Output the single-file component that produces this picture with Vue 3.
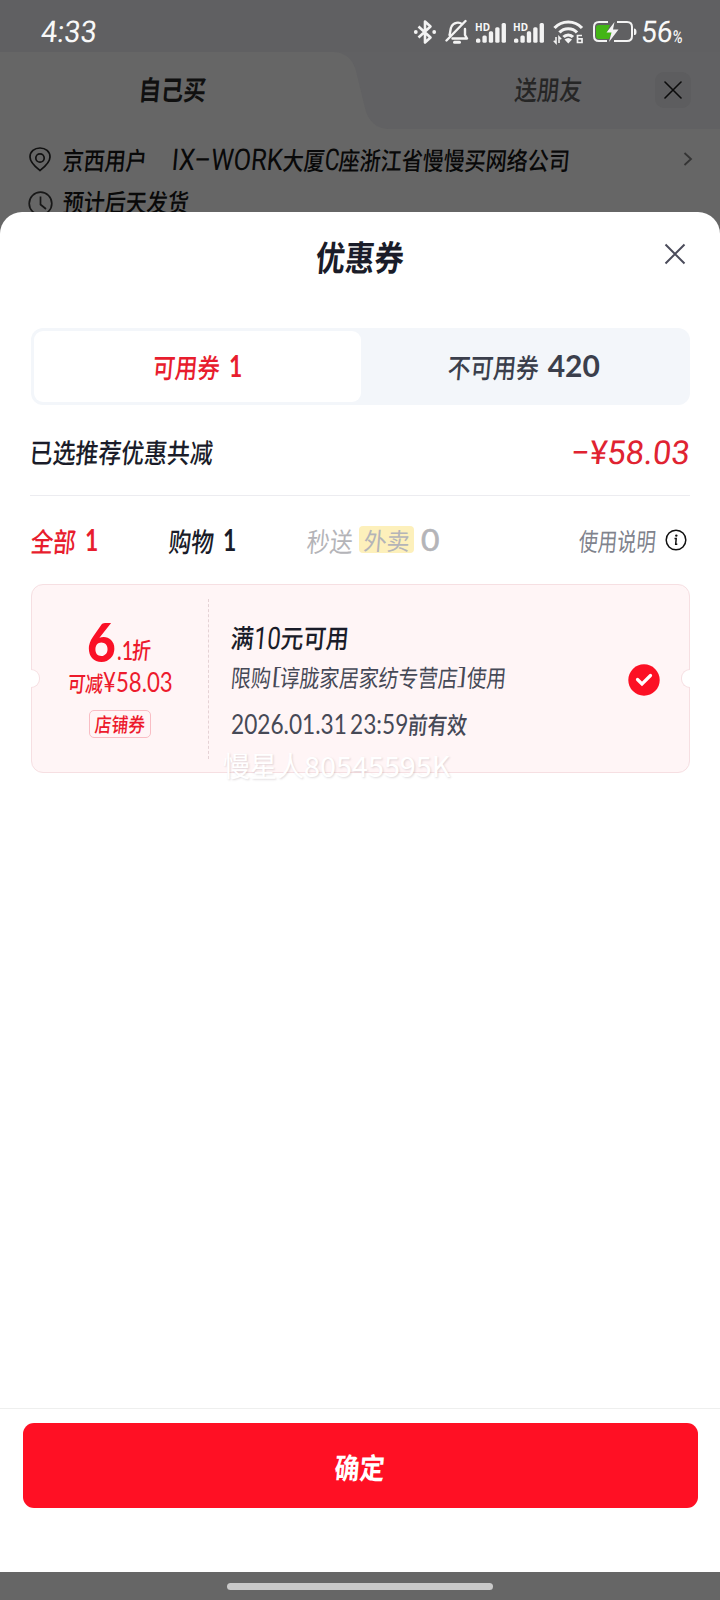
<script setup>
// Condenses a text run to the given advance width and keeps the layout in step.
const apply = (el, { value, modifiers }) => {
  const natural = el.offsetWidth
  const skew = modifiers.upright ? '' : 'skewX(-5deg) '
  el.style.transform = `${skew}scaleX(${value / natural})`
  el.style.marginRight = `${value - natural}px`
}
const vFit = { mounted: apply }
const bars = [[0, 17, 4], [6.2, 14, 7], [12.4, 10, 11], [18.6, 6, 15], [24.8, 2, 19]]
</script>

<template>
  <div class="screen">
    <header class="status">
      <span v-fit="56" class="time">4:33</span>
      <div class="indicators">
        <svg class="bt" width="24" height="26" viewBox="0 0 24 26">
          <path d="M5.500 7.500L17.500 18.500L12 23.500V2.500L17.500 7.500L5.500 18.500" fill="none" stroke="#f3f3f3" stroke-width="2.600" stroke-linejoin="round" />
          <circle cx="2.800" cy="13" r="1.900" fill="#f3f3f3" /><circle cx="21.200" cy="13" r="1.900" fill="#f3f3f3" />
        </svg>
        <svg class="bell" width="24" height="26" viewBox="0 0 24 26" fill="none" stroke="#f3f3f3" stroke-width="2.400" stroke-linecap="round" stroke-linejoin="round">
          <path d="M4.500 16C5.500 14 5 10 6.500 7.500C8.500 3.500 14 2.500 17 5.200M20 10V16L22 19.500H7.500M20.500 2L1.500 21.500" />
          <path d="M9.500 23.300H14.500" stroke-width="3" />
        </svg>
        <div v-for="n in 2" :key="n" class="signal">
          <span v-fit.upright="15" class="hd">HD</span>
          <svg width="31" height="22" viewBox="0 0 30 21.300">
            <rect v-for="b in bars" :key="b[0]" :x="b[0]" :y="b[1]" width="4.200" :height="b[2]" rx="1.500" fill="#f3f3f3" />
          </svg>
        </div>
        <svg class="wifi" width="31" height="26" viewBox="0 0 31 26" fill="none" stroke="#f3f3f3" stroke-width="3.200">
          <path d="M1.500 9C9 1 21.500 1 29 9M6.500 13.500C11 8.500 19.500 8.500 24 13.500M10.500 18C13 15.300 17.500 15.300 20 18" />
          <path d="M11.500 20.500Q15.300 17.500 19 20.500L15.300 24.500Z" fill="#f3f3f3" stroke="none" />
          <path d="M3 18V24L0.800 21.800M6 24V18L8.200 20.200" stroke-width="1.600" />
          <path d="M29 16.500H24.500V23.500H29V19.800H24.500" stroke-width="1.700" />
        </svg>
        <svg class="battery" width="46" height="24" viewBox="0 0 46 24">
          <path d="M7 5H18L15 12H20L17 19H7Q4 19 4 16V8Q4 5 7 5Z" fill="#43b516" />
          <path d="M16 2H7Q2 2 2 7V16Q2 21 7 21H15M25 2H35Q40 2 40 7V16Q40 21 35 21H22" fill="none" stroke="#f3f3f3" stroke-width="2" />
          <path d="M42 8.500Q44.500 8.500 44.500 12T42 15Z" fill="#f3f3f3" />
          <path d="M22.500 2L14.500 12.500H19.500L17 22L26.500 9.500H21Z" fill="#f3f3f3" />
        </svg>
        <span v-fit="32" class="pct">56</span>
        <span v-fit="10" class="sign">%</span>
      </div>
    </header>

    <nav class="tabs">
      <svg class="tab-shape" width="390" height="77" viewBox="0 0 390 77"><path d="M0 0H334Q351 1 356 19L365 56Q370 76 388 77H0Z" fill="#666" /></svg>
      <span v-fit="67" class="tab mine">自己买</span>
      <span v-fit="67" class="tab friend">送朋友</span>
      <div class="close-box">
        <svg width="18" height="18" viewBox="0 0 18 18"><path d="M1 1L17 17M17 1L1 17" stroke="#0b0b0b" stroke-width="1.600" stroke-linecap="round" /></svg>
      </div>
    </nav>

    <div class="address">
      <svg class="pin" width="24" height="26" viewBox="0 0 24 26" fill="none" stroke="#111" stroke-width="1.700">
        <path d="M12 24.500C9 22 2 17 2 11C2 5.500 6.500 2 12 2S22 5.500 22 11C22 17 15 22 12 24.500Z" /><circle cx="12" cy="12" r="4.200" />
      </svg>
      <span v-fit="84" class="addr">京西用户</span>
      <span v-fit="111" class="addr latin work">IX–WORK</span>
      <span v-fit="42" class="addr">大厦</span>
      <span v-fit="15" class="addr latin">C</span>
      <span v-fit="231" class="addr">座浙江省慢慢买网络公司</span>
      <svg class="chev" width="10" height="16" viewBox="0 0 10 16"><path d="M1.500 2L8 8L1.500 14" fill="none" stroke="#343434" stroke-width="1.800" /></svg>
    </div>
    <div class="delivery">
      <svg width="26" height="26" viewBox="0 0 26 26" fill="none" stroke="#181818" stroke-width="1.700"><circle cx="12.500" cy="12.500" r="11.300" /><path d="M12.500 5.500V13.500L18 18" /></svg>
      <span v-fit="126" class="addr">预计后天发货</span>
    </div>

    <section class="sheet">
      <div class="head">
        <span v-fit="88" class="title">优惠券</span>
        <svg class="x" width="22" height="22" viewBox="0 0 22 22"><path d="M1.500 1.500L20.500 20.500M20.500 1.500L1.500 20.500" stroke="#4b4c5b" stroke-width="2" /></svg>
      </div>

      <div class="segments">
        <div class="seg on"><span v-fit="67" class="cjk">可用券</span><b v-fit.upright="13" class="num">1</b></div>
        <div class="seg"><span v-fit="91" class="cjk">不可用券</span><b v-fit.upright="52" class="num">420</b></div>
      </div>

      <div class="summary">
        <span v-fit="183" class="picked">已选推荐优惠共减</span>
        <span v-fit="119" class="saved">−¥58.03</span>
      </div>

      <div class="filters">
        <div class="filter all"><span v-fit="45" class="cjk">全部</span><b v-fit.upright="13" class="num">1</b></div>
        <div class="filter shop"><span v-fit="45" class="cjk">购物</span><b v-fit.upright="13" class="num">1</b></div>
        <div class="filter fast"><span v-fit="46" class="cjk">秒送</span><i class="food"><span v-fit="46" class="cjk">外卖</span></i><b v-fit.upright="18" class="num">0</b></div>
        <div class="help">
          <span v-fit="77" class="cjk">使用说明</span>
          <svg width="22" height="22" viewBox="0 0 22 22"><circle cx="11" cy="11" r="9.800" fill="none" stroke="#111" stroke-width="1.500" /><circle cx="11.300" cy="6.600" r="1.200" fill="#111" /><path d="M9.500 9.500H11.200L10.700 15.300H12.300" fill="none" stroke="#111" stroke-width="1.500" /></svg>
        </div>
      </div>

      <article class="coupon">
        <i class="notch left"></i><i class="notch right"></i>
        <div class="value">
          <div class="rate"><b v-fit.upright="29" class="six">6</b><span v-fit.upright="16" class="tenth">.1</span><span v-fit="19" class="fold">折</span></div>
          <div class="cut"><span v-fit="35">可减</span><span v-fit.upright="70" class="money">¥58.03</span></div>
          <div class="kind"><span v-fit="50">店铺券</span></div>
        </div>
        <div class="detail">
          <div class="line cond"><span v-fit="23">满</span><span v-fit="27" class="latin">10</span><span v-fit="68">元可用</span></div>
          <div class="line limit"><span v-fit="40">限购</span><span v-fit="9" class="latin">[</span><span v-fit="178">谆胧家居家纺专营店</span><span v-fit="9" class="latin">]</span><span v-fit="39">使用</span></div>
          <div class="line expiry"><span v-fit.upright="177" class="date">2026.01.31 23:59</span><span v-fit="59">前有效</span></div>
        </div>
        <svg class="check" width="32" height="32" viewBox="0 0 32 32"><circle cx="16" cy="16" r="15.700" fill="#fc1024" /><path d="M9.500 15.500L14 20L22.500 11.500" fill="none" stroke="#fff" stroke-width="3.200" stroke-linecap="round" /></svg>
        <div class="watermark"><span v-fit.upright="81">慢星人</span><span v-fit.upright="146">80545595K</span></div>
      </article>

      <footer class="foot">
        <button class="ok"><span v-fit="50">确定</span></button>
      </footer>
    </section>
    <div class="gesture"><i></i></div>
  </div>
</template>

<style>
body { margin: 0; background: #666; }
</style>

<style scoped>
.screen { width: 720px; height: 1600px; display: flex; flex-direction: column; background: #666; overflow: hidden; font-family: "Noto Sans CJK SC", sans-serif; font-weight: 500; }
.screen span, .num, .six { display: inline-block; flex: none; white-space: nowrap; transform-origin: 0 50%; }
.status { height: 52px; flex: none; background: #606062; display: flex; align-items: center; justify-content: space-between; padding: 12px 37px 0 41px; box-sizing: border-box; color: #f8f8f8; }
.time { font: 400 30px/40px Roboto, sans-serif; }
.indicators { display: flex; align-items: center; }
.bell { margin-left: 8px; }
.signal { position: relative; width: 38px; height: 26px; display: flex; align-items: flex-start; }
.signal svg { margin: 2px 0 0 1px; }
.hd { position: absolute; left: 0; top: 2px; font: 700 10px/12px "Noto Sans", sans-serif; }
.bell + .signal { margin-left: 6px; }
.wifi { margin-left: 2px; }
.battery { margin-left: 8px; }
.pct { margin-left: 3px; font: 400 30px/40px Roboto, sans-serif; }
.sign { font: 500 18px/40px Roboto, sans-serif; padding-top: 9px; }
.tabs { position: relative; height: 77px; flex: none; background: #616163; display: flex; align-items: center; }
.tab-shape { position: absolute; left: 0; top: 0; }
.tab { position: relative; font-size: 27px; line-height: 36px; margin-bottom: 4px; }
.mine { margin-left: 139px; font-weight: 700; color: #101010; }
.friend { margin-left: 309px; color: #262626; }
.close-box { width: 36px; height: 36px; margin-left: auto; margin-right: 29px; margin-bottom: 1px; border-radius: 9px; background: #5d5d5f; display: grid; place-items: center; }
.address { height: 62px; flex: none; display: flex; align-items: center; padding: 0 27px 2px 28px; box-sizing: border-box; color: #090909; }
.addr { font-size: 25px; line-height: 36px; margin-bottom: 1px; }
.latin { font-family: Roboto, sans-serif; font-weight: 400; }
.address .latin { font-size: 30px; padding-top: 2px; }
.address .addr:nth-child(2) { margin-left: 11px; }
.work { margin-left: 25px; }
.chev { margin-left: auto; }
.delivery { height: 21px; flex: none; display: flex; align-items: flex-start; padding-left: 28px; color: #090909; }
.delivery .addr { margin: -8px 0 0 9px; }
.delivery svg { flex: none; }
.sheet { position: relative; flex: none; height: 1360px; background: #fff; border-radius: 22px 22px 0 0; display: flex; flex-direction: column; box-sizing: border-box; color: #1a1c29; }
.head { height: 116px; display: flex; justify-content: center; position: relative; padding-right: 4px; }
.title { font-size: 35px; line-height: 44px; margin-top: 22px; font-weight: 700; }
.head .x { position: absolute; right: 34px; top: 31px; }
.segments { margin: 0 30px 0 31px; height: 77px; padding: 3px; box-sizing: border-box; display: flex; border-radius: 12px; background: #f3f6fa; }
.seg { flex: 1; display: flex; align-items: center; justify-content: center; border-radius: 9px; color: #3b3f4c; }
.seg.on { background: #fff; color: #e81d2e; }
.cjk { font-size: 27px; line-height: 36px; }
.num { font: 700 30px/36px Lato, sans-serif; margin-bottom: 3px; }
.seg .num { margin-left: 9px; }
.summary { margin: 0 30px; height: 90px; display: flex; justify-content: space-between; align-items: center; border-bottom: 1px solid #ececf0; }
.picked { font-size: 27px; line-height: 36px; margin-top: 4px; }
.saved { font: 400 33px/40px Roboto, sans-serif; color: #e02331; margin-top: 6px; }
.filters { margin: 0 30px 0 31px; height: 88px; display: flex; align-items: center; }
.filter, .help { display: flex; align-items: center; height: 36px; }
.filter .cjk { padding-top: 1px; }
.filter .num { margin-left: 9px; }
.all { width: 138px; color: #e81d2e; }
.shop { width: 138px; }
.fast { color: #b4b4b8; }
.fast > .cjk, .food .cjk { font-weight: 400; }
.fast .food + .num { margin-left: 7px; font-weight: 400; -webkit-text-stroke: .6px #b4b4b8; }
.food { font-style: normal; width: 55px; height: 27px; margin-left: 6px; margin-bottom: 2px; display: flex; justify-content: center; align-items: center; border-radius: 4px; background: #fdf0bb; }
.filter .food .cjk { font-size: 24px; padding: 0; line-height: 27px; }
.help { margin-left: auto; color: #80838d; gap: 9px; padding-right: 3px; }
.help .cjk { font-size: 25px; font-weight: 400; }
.help svg { margin-bottom: 1px; }
.coupon { position: relative; margin: 0 30px 0 31px; height: 189px; box-sizing: border-box; border: 1px solid #f6dfe2; border-radius: 12px; background: #fff5f6; display: flex; align-items: center; }
.notch { position: absolute; top: 84px; width: 9px; height: 19px; background: #fff; border: 1px solid #f6dfe2; box-sizing: border-box; }
.left { left: -1px; border-left: 0; border-radius: 0 10px 10px 0; }
.right { right: -1px; border-right: 0; border-radius: 10px 0 0 10px; }
.value { width: 177px; height: 160px; flex: none; box-sizing: border-box; border-right: 1px dashed #e5d2d5; display: flex; flex-direction: column; align-items: center; color: #ed1a2c; }
.rate { height: 56px; margin-top: 16px; display: flex; align-items: baseline; margin-right: 2px; }
.six { font: 900 53px/54px Lato, sans-serif; color: #fa1026; }
.tenth { font: 500 27px/50px Lato, sans-serif; position: relative; top: -2px; left: 1px; }
.fold { font-size: 23px; line-height: 36px; position: relative; top: -3px; }
.cut { height: 30px; margin-top: -4px; display: flex; align-items: center; font-size: 22px; line-height: 30px; }
.money { font: 400 27px/30px Lato, sans-serif; }
.kind { margin-top: 13px; width: 62px; height: 28px; box-sizing: border-box; border: 1px solid #f9bdc4; border-radius: 5px; display: flex; align-items: center; justify-content: center; font-size: 20px; line-height: 26px; }
.detail { margin-left: 22px; height: 160px; }
.line { display: flex; align-items: center; height: 36px; line-height: 36px; }
.cond { font-size: 26px; margin-top: 20px; }
.cond .latin { font-size: 31px; font-weight: 400; padding-top: 4px; }
.limit { font-size: 24px; color: #464956; margin-top: 4px; font-weight: 400; }
.limit .latin { font-size: 21px; font-weight: 300; }
.expiry { font-size: 24px; color: #464956; margin-top: 11px; }
.date { font: 400 27px/36px Lato, sans-serif; word-spacing: -3px; }
.check { position: absolute; left: 596px; top: 79px; }
.watermark { position: absolute; left: 191px; top: 161px; display: flex; font-size: 28px; line-height: 38px; font-weight: 400; color: #fff; text-shadow: 1px 1px 2px rgba(100, 80, 90, .2); }
.foot { margin-top: auto; height: 164px; border-top: 1px solid #eeefee; padding: 14px 22px 0 23px; box-sizing: border-box; }
.ok { display: flex; align-items: center; justify-content: center; width: 100%; height: 85px; border: 0; border-radius: 11px; background: #ff1024; color: #fff; font: 700 29px/40px "Noto Sans CJK SC", sans-serif; }
.gesture { height: 28px; flex: none; background: #666; display: flex; justify-content: center; align-items: center; }
.gesture i { width: 266px; height: 7px; border-radius: 4px; background: #c9c9c9; }
</style>
